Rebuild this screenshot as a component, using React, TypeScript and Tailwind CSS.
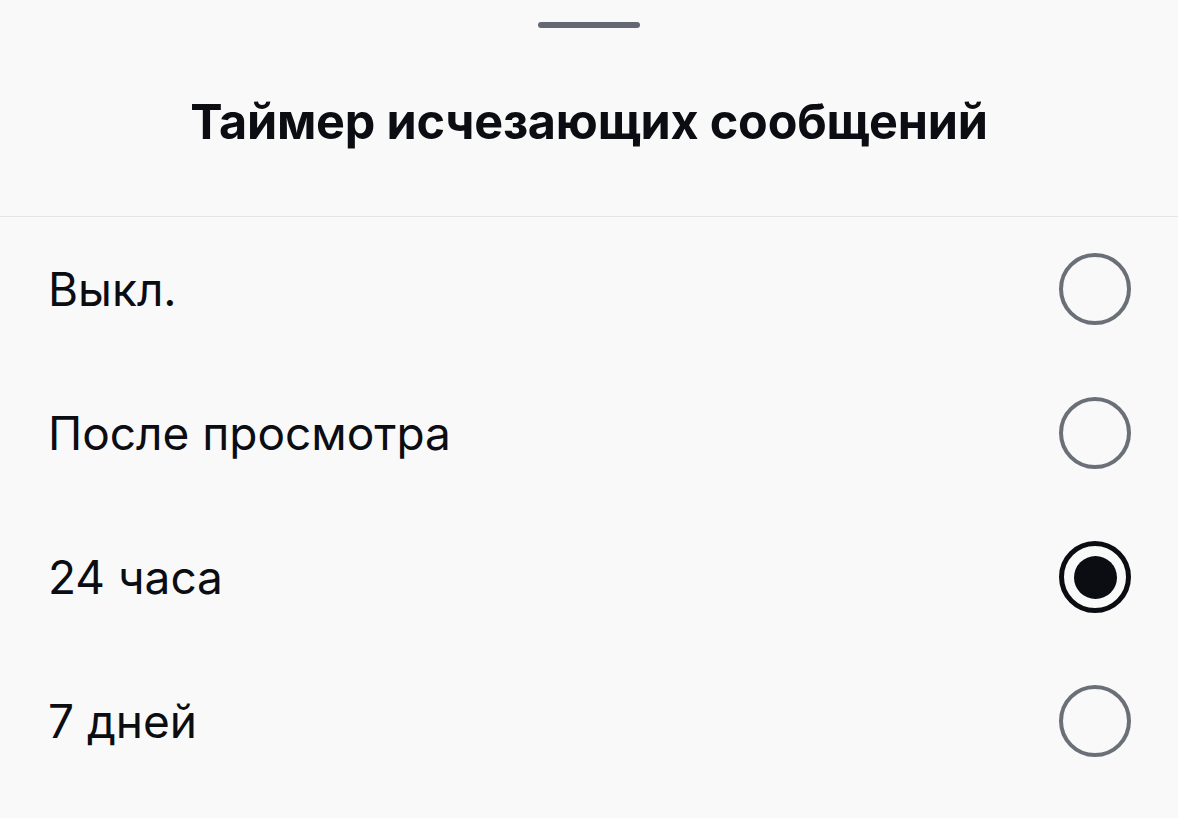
import { useState } from 'react'

const options = ['Выкл.', 'После просмотра', '24 часа', '7 дней']

function Radio({ checked }: { checked: boolean }) {
  return checked ? (
    <span className="flex h-[72px] w-[72px] items-center justify-center rounded-full border-[5px] border-[#0b0d12]">
      <span className="h-[43px] w-[43px] rounded-full bg-[#0b0d12]" />
    </span>
  ) : (
    <span className="h-[72px] w-[72px] rounded-full border-[4px] border-[#6b6f78]" />
  )
}

export default function App() {
  const [selected, setSelected] = useState(2)

  return (
    <div className="flex h-[818px] w-full flex-col bg-[#f9f9f9] font-['Inter',sans-serif] text-[#0b0d12]">
      <div className="flex h-[217px] flex-col items-center border-b border-[#e4e4e6]">
        <div className="mt-[22px] h-[6px] w-[102px] rounded-full bg-[#646873]" />
        <h1 className="mt-[70px] text-[48.5px] font-bold leading-none tracking-[-0.2px]">
          Таймер исчезающих сообщений
        </h1>
      </div>
      <div className="flex flex-col">
        {options.map((label, i) => (
          <button
            key={label}
            type="button"
            onClick={() => setSelected(i)}
            className="flex h-[144px] items-center justify-between pl-[48px] pr-[47px] text-left"
          >
            <span className="text-[46px] leading-none">{label}</span>
            <Radio checked={selected === i} />
          </button>
        ))}
      </div>
    </div>
  )
}
